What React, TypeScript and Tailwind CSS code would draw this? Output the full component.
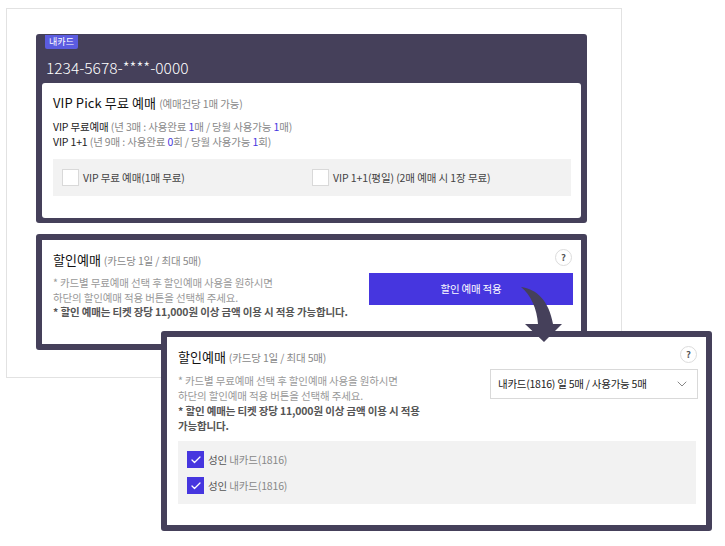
import { ChevronDown, Check } from "lucide-react";

const font = { fontFamily: '"Noto Sans CJK KR", "Noto Sans", sans-serif' };

function HelpButton() {
  return (
    <div className="flex h-[17px] w-[17px] items-center justify-center rounded-full border border-[#dcdcdc] bg-white text-[9.5px] font-bold leading-none text-[#555]">
      ?
    </div>
  );
}

function Notice() {
  return (
    <>
      * 카드별 무료예매 선택 후 할인예매 사용을 원하시면
      <br />
      하단의 할인예매 적용 버튼을 선택해 주세요.
      <br />
    </>
  );
}

function Title() {
  return (
    <h3 className="text-[13px] font-normal leading-[20px] text-[#111]">
      할인예매 <span className="text-[10.5px] tracking-[-0.15px] text-[#888]">(카드당 1일 / 최대 5매)</span>
    </h3>
  );
}

function EmptyBox() {
  return <span className="h-[17px] w-[17px] shrink-0 border border-[#d9d9d9] bg-white" />;
}

function CheckedRow() {
  return (
    <div className="flex h-[18px] items-center gap-[4px] text-[10.5px] tracking-[-0.15px] text-[#555]">
      <span className="flex h-[17px] w-[17px] shrink-0 items-center justify-center bg-[#4636df]">
        <Check size={12} strokeWidth={2.5} className="text-white" />
      </span>
      <span>
        성인 <span className="text-[#888]">내카드(1816)</span>
      </span>
    </div>
  );
}

export default function App() {
  return (
    <div className="relative h-[546px] w-[725px] overflow-hidden bg-white" style={font}>
      <div className="ml-[6px] mt-[8px] flex h-[370px] w-[616px] flex-col gap-[11px] border border-[#e2e2e2] pl-[29px] pt-[25px]">
        {/* card 1 */}
        <section className="h-[189px] w-[551px] rounded-[3px] bg-[#45405a] px-[6px] pb-[5px]">
          <span className="ml-[3px] mt-[1px] block h-[14px] w-[33px] rounded-b-[2px] bg-[#5b5ce0] text-center text-[9px] leading-[14px] text-white">
            내카드
          </span>
          <div className="ml-[4px] mt-[8px] h-[26px] text-[15.5px] font-light leading-[20px] text-white">1234-5678-****-0000</div>
          <div className="h-[135px] rounded-[3px] bg-white px-[11px] pt-[10px]">
            <h3 className="text-[13px] font-normal leading-[20px] tracking-[0.1px] text-[#111]">
              VIP Pick 무료 예매 <span className="text-[10.5px] tracking-[-0.15px] text-[#888]">(예매건당 1매 가능)</span>
            </h3>
            <div className="mt-[5px] text-[10.5px] leading-[15px] tracking-[-0.15px] text-[#888]">
              <p>
                <span className="text-[#222]">VIP 무료예매</span> (년 3매 : 사용완료 <span className="text-[#4636df]">1</span>매 / 당월 사용가능 <span className="text-[#4636df]">1</span>매)
              </p>
              <p>
                <span className="text-[#222]">VIP 1+1</span> (년 9매 : 사용완료 <span className="text-[#4636df]">0</span>회 / 당월 사용가능 <span className="text-[#4636df]">1</span>회)
              </p>
            </div>
            <div className="mt-[10px] flex h-[37px] w-[518px] items-center bg-[#f2f2f2] pl-[9px] text-[10.5px] tracking-[-0.1px] text-[#444]">
              <div className="flex w-[250px] items-center gap-[4px]">
                <EmptyBox />
                VIP 무료 예매(1매 무료)
              </div>
              <div className="flex items-center gap-[4px]">
                <EmptyBox />
                VIP 1+1(평일) (2매 예매 시 1장 무료)
              </div>
            </div>
          </div>
        </section>

        {/* card 2 */}
        <section className="flex h-[116px] w-[551px] justify-between rounded-[3px] border-[6px] border-[#45405a] bg-white pl-[11px] pr-[8px] pt-[10px]">
          <div>
            <Title />
            <p className="mt-[5px] text-[10.5px] leading-[14.7px] tracking-[-0.15px] text-[#999]">
              <Notice />
              <b className="font-bold text-[#555]">* 할인 예매는 티켓 장당 11,000원 이상 금액 이용 시 적용 가능합니다.</b>
            </p>
          </div>
          <div className="flex flex-col items-end">
            <div className="mr-[1px] mt-[-1px]">
              <HelpButton />
            </div>
            <button className="mt-[7px] h-[32px] w-[204px] bg-[#4636df] text-[10.5px] tracking-[-0.2px] text-white">
              할인 예매 적용
            </button>
          </div>
        </section>
      </div>

      {/* zoomed card over the page */}
      <section className="absolute left-[161px] top-[331px] z-10 h-[200px] w-[551px] rounded-[3px] border-[6px] border-[#45405a] bg-white pl-[11px] pr-[8px] pt-[10px]">
        <div className="flex justify-between">
          <div className="w-[260px]">
            <Title />
            <p className="mt-[5px] break-keep text-[10.5px] leading-[15px] tracking-[-0.15px] text-[#999]">
              <Notice />
              <b className="font-bold text-[#555]">* 할인 예매는 티켓 장당 11,000원 이상 금액 이용 시 적용 가능합니다.</b>
            </p>
          </div>
          <div className="flex flex-col items-end">
            <div className="mr-[1px] mt-[-1px]">
              <HelpButton />
            </div>
            <div className="mt-[6px] flex h-[30px] w-[208px] items-center justify-between border border-[#d9d9d9] pl-[7px] pr-[7px] text-[10.5px] tracking-[-0.25px] text-[#222]">
              내카드(1816) 일 5매 / 사용가능 5매
              <ChevronDown size={16} strokeWidth={1.5} className="text-[#888]" />
            </div>
          </div>
        </div>
        <div className="mt-[8px] flex h-[63px] w-[518px] flex-col justify-center gap-[8px] bg-[#f2f2f2] pl-[9px]">
          <CheckedRow />
          <CheckedRow />
        </div>
      </section>

      {/* arrow between the two cards */}
      <svg className="absolute left-[520px] top-[285px] z-20" width="48" height="60" viewBox="0 0 48 60">
        <path d="M1 2 C17 4 29 16 33 39 L42 39 L24 57 L5 39 L18 39 C17 24 11 10 1 2 Z" fill="#45405a" />
      </svg>
    </div>
  );
}
